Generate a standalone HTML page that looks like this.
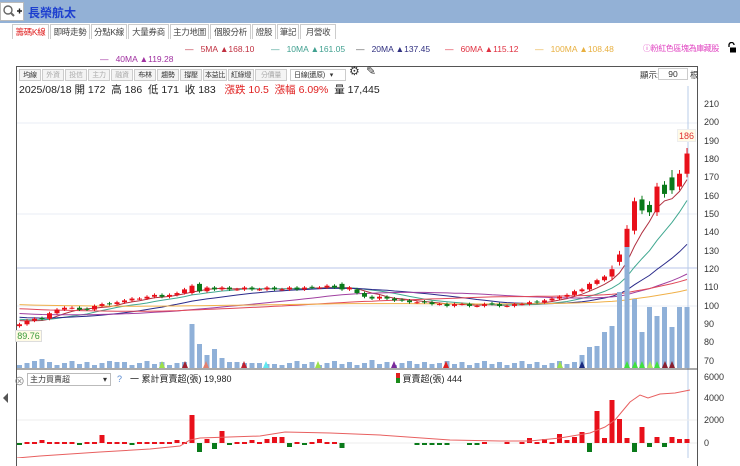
<!DOCTYPE html>
<html><head><meta charset="utf-8"><style>
*{margin:0;padding:0;box-sizing:border-box}
body{width:740px;height:458px;overflow:hidden;background:#fff;font-family:"Liberation Sans","Noto Sans CJK TC",sans-serif;position:relative;font-size:10px;color:#333}
.abs{position:absolute;white-space:nowrap}
#title{left:0;top:0;width:740px;height:23px;background:#93b1d6}
#srch{left:0;top:2px;width:24px;height:19px;background:#fff;border:1px solid #bbb}
.tab{position:absolute;top:24px;height:15px;border:1px solid #ccc;border-bottom:none;font-size:8.5px;line-height:14px;text-align:center;color:#444;background:#fff;white-space:nowrap;overflow:hidden;letter-spacing:-0.3px}
.tb{position:absolute;top:69px;height:12px;border:1px solid #ccc;font-size:7px;line-height:11px;text-align:center;color:#333;background:#f4f4f4;white-space:nowrap;overflow:hidden;letter-spacing:-0.3px}
.tb.g{color:#aaa}
.ax{position:absolute;left:704px;font-size:9px;color:#333}
</style></head><body>
<div id="title" class="abs"></div>
<div id="srch" class="abs"><svg width="22" height="17"><circle cx="7" cy="7" r="4" fill="none" stroke="#666" stroke-width="1.4"/><line x1="10" y1="10" x2="13" y2="13" stroke="#666" stroke-width="2"/><path d="M16 8h5M18.5 5.5v5" stroke="#222" stroke-width="1.4"/></svg></div>
<div class="abs" style="left:28px;top:4px;font-size:12px;font-weight:bold;color:#1d3fcf">長榮航太</div>

<div class="tab" style="left:12px;width:37px;color:#e02020">籌碼K線</div>
<div class="tab" style="left:50px;width:40px">即時走勢</div>
<div class="tab" style="left:91px;width:36px">分點K線</div>
<div class="tab" style="left:128px;width:41px">大量券商</div>
<div class="tab" style="left:170px;width:39px">主力地圖</div>
<div class="tab" style="left:210px;width:41px">個股分析</div>
<div class="tab" style="left:252px;width:24px">證股</div>
<div class="tab" style="left:277px;width:22px">筆記</div>
<div class="tab" style="left:300px;width:36px">月營收</div>

<div class="abs" style="left:185px;top:44px;font-size:8.5px;color:#c03040">—&nbsp;&nbsp; 5MA ▲168.10</div>
<div class="abs" style="left:271px;top:44px;font-size:8.5px;color:#40a090">—&nbsp;&nbsp; 10MA ▲161.05</div>
<div class="abs" style="left:356px;top:44px;font-size:8.5px;color:#303080"><span style="color:#555">—</span>&nbsp;&nbsp; 20MA ▲137.45</div>
<div class="abs" style="left:445px;top:44px;font-size:8.5px;color:#e03040">—&nbsp;&nbsp; 60MA ▲115.12</div>
<div class="abs" style="left:535px;top:44px;font-size:8.5px;color:#e8b040">—&nbsp;&nbsp; 100MA ▲108.48</div>
<div class="abs" style="left:643px;top:43px;font-size:8px;color:#e040c0;letter-spacing:-0.4px">ⓘ粉紅色區塊為庫藏股</div>
<svg class="abs" style="left:727px;top:42px" width="10" height="12"><path d="M2 5V3a2.5 2.5 0 0 1 5 0" fill="none" stroke="#000" stroke-width="1.3"/><rect x="3" y="5.5" width="6" height="5" fill="#000"/></svg>
<div class="abs" style="left:100px;top:54px;font-size:8.5px;color:#a030a0">—&nbsp;&nbsp; 40MA ▲119.28</div>

<div class="abs" style="left:16px;top:66px;width:682px;height:400px;border:1px solid #555;border-bottom:none"></div>
<div class="tb" style="left:19px;width:22px">均線</div>
<div class="tb g" style="left:42px;width:22px">外資</div>
<div class="tb g" style="left:65px;width:22px">投信</div>
<div class="tb g" style="left:88px;width:22px">主力</div>
<div class="tb g" style="left:111px;width:22px">融資</div>
<div class="tb" style="left:134px;width:22px">布林</div>
<div class="tb" style="left:157px;width:22px">趨勢</div>
<div class="tb" style="left:180px;width:22px">撐壓</div>
<div class="tb" style="left:203px;width:24px">本益比</div>
<div class="tb" style="left:228px;width:26px">紅綠燈</div>
<div class="tb g" style="left:255px;width:32px">分價量</div>
<div class="tb" style="left:290px;width:56px;background:#fff;text-align:left;padding-left:3px">日線(還原) &nbsp;&nbsp;▾</div>
<div class="abs" style="left:349px;top:64px;font-size:12px;line-height:14px">⚙</div>
<div class="abs" style="left:366px;top:64px;font-size:12px;line-height:14px">✎</div>
<div class="abs" style="left:640px;top:69px;font-size:8.5px">顯示:</div>
<div class="abs" style="left:658px;top:68px;width:30px;height:12px;border:1px solid #ccc;font-size:8.5px;text-align:center;line-height:11px">90</div>
<div class="abs" style="left:690px;top:69px;font-size:8.5px">根</div>
<div class="abs" style="left:19px;top:82px;font-size:10.5px;color:#222">2025/08/18 開 172 &nbsp;高 186 &nbsp;低 171 &nbsp;收 183 &nbsp;&nbsp;<span style="color:#e02020">漲跌 10.5 &nbsp;漲幅 6.09%</span> &nbsp;量 17,445</div>

<svg class="abs" style="left:0;top:0" width="740" height="458" id="ch">
<g stroke="#e8ecf4" stroke-width="1">
<line x1="17" y1="123" x2="697" y2="123"/><line x1="17" y1="214" x2="697" y2="214"/><line x1="17" y1="306" x2="697" y2="306"/>
</g>
<line x1="17" y1="268" x2="697" y2="268" stroke="#b8c4e8"/>
<line x1="688" y1="86" x2="688" y2="458" stroke="#b8cce8"/>
<line x1="17" y1="369" x2="697" y2="369" stroke="#555"/>
<line x1="17" y1="420" x2="697" y2="420" stroke="#eee"/>
<line x1="17" y1="443" x2="697" y2="443" stroke="#eee"/>
<g id="g"></g>
<path d="M3 398 L8 393 L8 403Z" fill="#555"/>
</svg>

<div class="ax" style="top:99px">210</div><div class="ax" style="top:117px">200</div><div class="ax" style="top:136px">190</div>
<div class="ax" style="top:154px">180</div><div class="ax" style="top:172px">170</div><div class="ax" style="top:191px">160</div>
<div class="ax" style="top:209px">150</div><div class="ax" style="top:227px">140</div><div class="ax" style="top:246px">130</div>
<div class="ax" style="top:264px">120</div><div class="ax" style="top:282px">110</div><div class="ax" style="top:301px">100</div>
<div class="ax" style="top:319px">90</div><div class="ax" style="top:337px">80</div><div class="ax" style="top:356px">70</div>
<div class="ax" style="top:372px">6000</div><div class="ax" style="top:393px">4000</div><div class="ax" style="top:415px">2000</div><div class="ax" style="top:438px">0</div>
<div class="abs" style="left:677px;top:129px;width:19px;height:13px;background:#fffbe6;border:1px solid #eee;color:#e03030;font-size:9px;text-align:center;line-height:12px">186</div>
<div class="abs" style="left:15px;top:330px;width:27px;height:12px;background:#fffbe6;border:1px solid #ddd;color:#3a9a3a;font-size:9px;text-align:center;line-height:11px">89.76</div>

<div class="abs" style="left:14px;top:373px;font-size:11px;color:#888">⊗</div>
<div class="abs" style="left:27px;top:373px;width:84px;height:13px;border:1px solid #bbb;font-size:8px;line-height:12px;padding-left:2px">主力買賣超<span style="float:right;padding-right:3px">▾</span></div>
<div class="abs" style="left:117px;top:374px;font-size:9px;color:#5a8ad0">?</div>
<div class="abs" style="left:130px;top:372px;font-size:9px;color:#222">一 累計買賣超(張) 19,980</div>
<div class="abs" style="left:396px;top:372px;font-size:9px;color:#222"><span style="display:inline-block;width:4px;height:10px;background:linear-gradient(#e02020 50%,#1a8a1a 50%);vertical-align:-1px"></span> 買賣超(張) 444</div>

<script>
var c=[90,92,93,93,96,98,99,99,98,98,100,101,101,102,103,104,104,105,106,105,106,107,109,111,108,110,109,110,109,109,110,109,109,110,109,109,110,109,110,110,110,111,110,109,110,107,105,104,105,104,103,103,102,102,102,101,101,100,101,101,100,100,101,101,100,100,101,101,102,102,103,104,105,106,108,109,112,114,116,120,128,142,157,152,151,165,161,163,172,183];
var o=[];for(var i=0;i<90;i++){o[i]=i?c[i-1]:89;}
o[23]=107;o[24]=112;o[43]=112;o[45]=109;o[83]=158;o[84]=155;o[86]=166;o[87]=170;o[88]=165;o[89]=172;o[81]=130;o[80]=124;o[82]=141;o[85]=151;
for(var i=0;i<90;i++){if(Math.abs(o[i]-c[i])<0.1&&i%3==0)o[i]=c[i]+0.4;}
function Y(p){return 361-(p-70)*1.836}
function X(i){return 19.5+7.5*i}
var s='';
var pad=[];for(var i=0;i<100;i++)pad.push(i<60?104:100-(i-60)*0.2);
var all=pad.concat(c);
var mas=[[5,'#b03040'],[10,'#40a890'],[20,'#2a2a8a'],[40,'#a040a0'],[60,'#e04858'],[100,'#f0b048']];
mas.forEach(function(m){var d='';for(var i=0;i<90;i++){var k=i+100,sm=0;for(var j=0;j<m[0];j++)sm+=all[k-j];var v=sm/m[0];d+=(i?'L':'M')+X(i).toFixed(1)+' '+Y(v).toFixed(1);}s+='<path d="'+d+'" fill="none" stroke="'+m[1]+'" stroke-width="1"/>';});
for(var i=0;i<90;i++){var up=c[i]>=o[i],col=up?'#e8101a':'#0a7a1a';var hi=Math.max(o[i],c[i])+(i>78?2:0.8),lo=Math.min(o[i],c[i])-(i>78?2:0.8);if(i==89)hi=186;if(i==87)hi=174;
s+='<line x1="'+X(i)+'" x2="'+X(i)+'" y1="'+Y(hi)+'" y2="'+Y(lo)+'" stroke="'+col+'"/>';
var t=Y(Math.max(o[i],c[i])),h=Math.max(1,Y(Math.min(o[i],c[i]))-t);s+='<rect x="'+(X(i)-2.5)+'" y="'+t+'" width="5" height="'+h+'" fill="'+col+'"/>';}
var v=[];for(var i=0;i<90;i++)v[i]=3+((i*7)%5);
var big={4:9,14:6,23:6,24:44,25:24,26:13,27:19,28:10,29:6,31:5,33:5,35:4,48:8,56:4};
for(var k in big)v[k-1]=big[k];
var tail=[13,21,22,36,42,76,121,69,36,61,52,61,41,61,61];
var fin=v.slice(0,75).concat(tail);
for(var i=0;i<90;i++){var hh=fin[i];s+='<rect x="'+(X(i)-2.5)+'" y="'+(368-hh)+'" width="5" height="'+hh+'" fill="#8fb0d8"/>';}
var tp2=[[162,'#9be04a'],[185,'#a02030'],[206,'#e08070'],[244,'#c02030'],[266,'#60e8f0'],[318,'#9be04a'],[394,'#7a2a9a'],[446,'#e02020'],[560,'#9be04a'],[582,'#1a2a80'],[627,'#40e040'],[635,'#40e040'],[642,'#40e040'],[650,'#a8e860'],[657,'#40e040'],[665,'#8a2030'],[672,'#8a2030']];
tp2.forEach(function(t){s+='<path d="M'+(t[0]-3)+' 368 L'+t[0]+' 361 L'+(t[0]+3)+' 368Z" fill="'+t[1]+'"/>';});
var bb=[-2,1,1,3,1,1,1,1,-2,1,1,8,1,1,1,-1,1,1,1,1,1,3,1,28,-9,4,-6,12,-1,1,1,3,1,4,6,6,-4,1,-1,1,4,1,1,-5,0,0,0,0,0,0,0,0,0,-1,-1,-1,-1,-1,0,0,-2,-2,1,0,0,1,0,1,5,1,4,1,9,3,6,11,-9,32,5,43,24,5,-9,16,-4,6,-4,6,4,4];
for(var i=0;i<90;i++){var val=bb[i]||0;if(val==0)continue;var col=val>0?'#e8101a':'#0a7a1a';var hh=Math.abs(val);var y=val>0?443-hh:443;s+='<rect x="'+(X(i)-2.5)+'" y="'+y+'" width="5" height="'+Math.max(hh,2)+'" fill="'+col+'"/>';}
var lp=[[17,458],[40,456],[100,452],[150,449],[180,446],[190,440],[200,438],[260,436],[285,432],[330,433],[380,435],[450,440],[500,441],[530,441],[560,438],[590,433],[605,427],[615,420],[625,408],[630,402],[640,395],[648,398],[660,394],[675,393],[690,390]];
var d='';lp.forEach(function(p,i){d+=(i?'L':'M')+p[0]+' '+p[1];});
s+='<path d="'+d+'" fill="none" stroke="#e86060" stroke-width="1"/>';
document.getElementById('g').innerHTML=s;
</script>
</body></html>
